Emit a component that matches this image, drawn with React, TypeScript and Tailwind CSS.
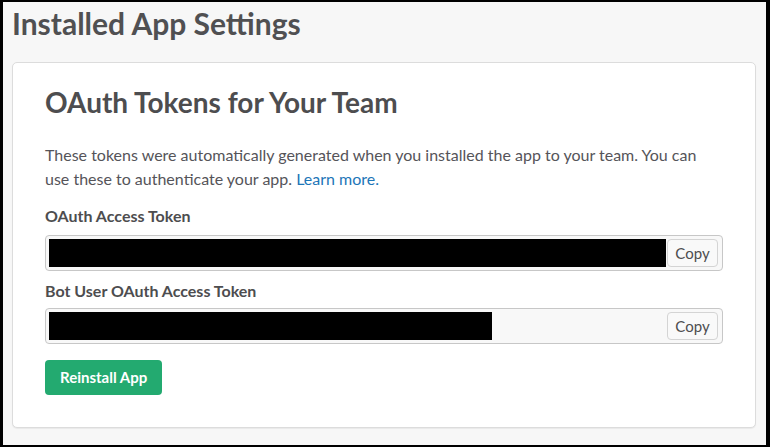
const lato = { fontFamily: "Lato, 'Noto Sans', sans-serif" };

const TokenField = ({ redactWidth }: { redactWidth?: string }) => (
  <div className="flex items-center h-[36px] rounded-[4px] border border-[#c7c7c7] bg-[#f8f8f8] pl-[3px] pr-[4px]">
    <div className={`h-[28px] bg-black ${redactWidth ?? "flex-1"}`} />
    <button className="ml-[1px] h-[28px] w-[51px] shrink-0 rounded-[4px] border border-[#d4d4d4] bg-[#f9f9f9] text-[15px] text-[#4d4d4f]">
      Copy
    </button>
  </div>
);

export default function App() {
  return (
    <div
      className="w-[770px] h-[447px] bg-[#f7f7f7] border-l-[3px] border-t-[2px] border-r-[4px] border-b-[2px] border-black overflow-hidden"
      style={lato}
    >
      <h1 className="ml-[9px] mt-[3px] text-[30px] leading-[36px] font-bold text-[#505052]">
        Installed App Settings
      </h1>

      {/* Token card */}
      <div className="ml-[9px] mt-[21px] w-[744px] h-[366px] rounded-[5px] border border-[#dcdcdc] bg-white px-[32px] pt-[22px] shadow-[0_1px_1px_rgba(0,0,0,0.06)]">
        <h2 className="text-[28px] leading-[34px] font-bold text-[#4d4d4f]">
          OAuth Tokens for Your Team
        </h2>
        <p className="mt-[24px] w-[660px] text-[16px] leading-[24px] text-[#555459]">
          These tokens were automatically generated when you installed the app to your team. You can
          use these to authenticate your app. <span className="text-[#1d76b8]">Learn more.</span>
        </p>

        <div className="mt-[14px] text-[16px] leading-[22px] font-bold text-[#4d4d4f]">
          OAuth Access Token
        </div>
        <div className="mt-[8px]">
          <TokenField />
        </div>

        <div className="mt-[9px] text-[16px] leading-[22px] font-bold text-[#4d4d4f]">
          Bot User OAuth Access Token
        </div>
        <div className="mt-[6px]">
          <TokenField redactWidth="w-[443px] mr-auto" />
        </div>

        <button className="mt-[16px] h-[35px] rounded-[4px] bg-[#23aa70] px-[15px] text-[15px] font-bold text-white">
          Reinstall App
        </button>
      </div>
    </div>
  );
}
